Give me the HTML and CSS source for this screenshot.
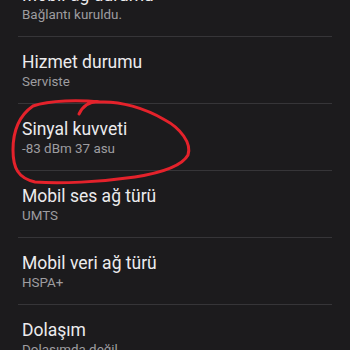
FILE: index.html
```html
<!DOCTYPE html>
<html lang="tr">
<head>
<meta charset="utf-8">
<link rel="stylesheet" href="styles.css">
</head>
<body>
<div class="screen">
  <ul class="list">
    <li class="item"><div class="title">Mobil ağ durumu</div><div class="sub">Bağlantı kuruldu.</div></li>
    <li class="item"><div class="title">Hizmet durumu</div><div class="sub">Serviste</div></li>
    <li class="item"><div class="title">Sinyal kuvveti</div><div class="sub">-83 dBm 37 asu</div></li>
    <li class="item"><div class="title">Mobil ses ağ türü</div><div class="sub">UMTS</div></li>
    <li class="item"><div class="title">Mobil veri ağ türü</div><div class="sub">HSPA+</div></li>
    <li class="item"><div class="title">Dolaşım</div><div class="sub">Dolaşımda değil</div></li>
  </ul>
  <svg class="scribble" width="350" height="350" viewBox="0 0 350 350">
    <path d="M79 114 C 83 106, 90 101, 100 102 M100 102 C 80 100, 50 100, 33 106 C 20 115, 13 130, 13 150 C 13 168, 18 178, 35 182 C 60 184, 100 182, 135 177 C 160 173, 182 166, 188 155 C 192 143, 180 128, 165 120 C 145 108, 120 101, 100 102" fill="none" stroke="#e4222b" stroke-width="3" stroke-linecap="round" stroke-linejoin="round"/>
  </svg>
</div>
</body>
</html>
```

FILE: styles.css
```css
html, body {
  margin: 0;
  padding: 0;
  background: #1c1b1d;
}
.screen {
  position: relative;
  width: 350px;
  height: 350px;
  overflow: hidden;
  background: #1c1b1d;
  font-family: Roboto, "Noto Sans", sans-serif;
}
.list {
  list-style: none;
  margin: -30px 0 0 0;
  padding: 0 18px;
}
.item {
  padding: 14px 0 12px 4px;
  border-bottom: 1px solid #363538;
}
.title {
  font-size: 17.5px;
  line-height: 22px;
  color: #ecebed;
}
.sub {
  font-size: 13.4px;
  line-height: 18px;
  color: #9e9da0;
}
.scribble {
  position: absolute;
  left: 0;
  top: 0;
  pointer-events: none;
}
```
